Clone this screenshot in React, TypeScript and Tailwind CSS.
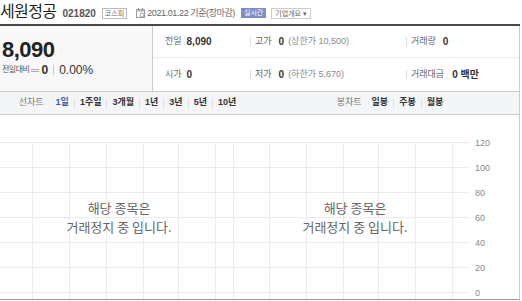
import React from 'react';

const hLines = [0, 25, 50, 75, 100, 125, 150];
const vLines = [32, 69, 106, 143, 178, 215, 233, 269, 306, 343, 378, 415, 452];
const yLabels = ['120', '100', '80', '60', '40', '20', '0'];

function Sep() {
  return <span className="mx-[5px] inline-block w-px h-[9px] bg-[#dddddd]" />;
}

function CalendarIcon() {
  return (
    <svg width="9" height="10" viewBox="0 0 9 10" className="shrink-0">
      <rect x="0.5" y="1.5" width="8" height="8" fill="#fff" stroke="#9a9a9a" />
      <rect x="0.5" y="1.5" width="8" height="2" fill="#b5b5b5" />
      <rect x="2" y="0" width="1" height="2" fill="#888" />
      <rect x="6" y="0" width="1" height="2" fill="#888" />
      <circle cx="6" cy="7" r="2" fill="#fff" stroke="#8a8a8a" strokeWidth="0.8" />
    </svg>
  );
}

export default function App() {
  return (
    <div className="w-[522px] h-[301px] overflow-hidden bg-white font-['Liberation_Sans','Noto_Sans_CJK_KR',sans-serif] text-[#333]">
      {/* Title */}
      <div className="flex items-center h-[24px] w-[520px]">
        <h1 className="text-[16px] leading-[24px] font-normal text-[#222] tracking-[-0.6px]">세원정공</h1>
        <span className="ml-[6px] text-[10px] font-bold text-[#555] leading-none mt-[3px]">021820</span>
        <span className="ml-[6px] mt-[2px] border border-[#bbbbbb] h-[11px] px-[2px] text-[7px] leading-[9px] text-[#666]">코스피</span>
        <span className="ml-[9px] mt-[2px]"><CalendarIcon /></span>
        <span className="ml-[2px] mt-[2px] text-[9px] leading-none text-[#666] tracking-[-0.4px]">2021.01.22 기준(장마감)</span>
        <span className="ml-[6px] mt-[2px] bg-[#7d8fc4] h-[10px] px-[3px] text-[7px] leading-[10px] text-white">실시간</span>
        <span className="ml-[5px] mt-[2px] border border-[#cccccc] h-[11px] px-[3px] text-[7px] leading-[9px] text-[#666]">기업개요 ▾</span>
      </div>
      <div className="h-[2px] w-[520px] bg-[#4a4a4a]" />

      <div className="w-[520px] border-r border-[#cccccc]">
        {/* Price panel */}
        <div className="flex h-[65px]">
          <div className="w-[153px] bg-[#f8f8f8] border-r border-[#cccccc] pl-[2px] pt-[12px] flex flex-col">
            <div className="text-[22px] leading-[24px] font-bold text-[#222] tracking-[-0.5px]">8,090</div>
            <div className="flex items-center h-[14px] mt-[1px]">
              <span className="text-[8px] text-[#555] tracking-[-0.5px]">전일대비</span>
              <span className="ml-[2px] flex flex-col gap-[1px]">
                <span className="block w-[8px] h-px bg-[#aaa]" />
                <span className="block w-[8px] h-px bg-[#aaa]" />
              </span>
              <span className="ml-[2px] text-[12px] font-bold text-[#333]">0</span>
              <span className="mx-[5px] inline-block w-px h-[10px] bg-[#cccccc]" />
              <span className="text-[12px] text-[#333]">0.00%</span>
            </div>
          </div>
          <div className="flex-1 flex flex-col">
            <div className="h-[32px] border-b border-[#eeeeee] grid grid-cols-[92px_156px_1fr] items-center text-[10px]">
              <div className="pl-[12px] flex items-center">
                <span className="text-[9px] text-[#666]">전일</span>
                <span className="ml-[5px] font-bold">8,090</span>
              </div>
              <div className="flex items-center">
                <Sep />
                <span className="text-[9px] text-[#666] -ml-[1px]">고가</span>
                <span className="ml-[7px] font-bold">0</span>
                <span className="ml-[4px] text-[9px] text-[#888]">(상한가 10,500)</span>
              </div>
              <div className="flex items-center">
                <Sep />
                <span className="text-[9px] text-[#666] -ml-[1px]">거래량</span>
                <span className="ml-[7px] font-bold">0</span>
              </div>
            </div>
            <div className="flex-1 grid grid-cols-[92px_156px_1fr] items-center text-[10px]">
              <div className="pl-[12px] flex items-center">
                <span className="text-[9px] text-[#666]">시가</span>
                <span className="ml-[5px] font-bold">0</span>
              </div>
              <div className="flex items-center">
                <Sep />
                <span className="text-[9px] text-[#666] -ml-[1px]">저가</span>
                <span className="ml-[7px] font-bold">0</span>
                <span className="ml-[4px] text-[9px] text-[#888]">(하한가 5,670)</span>
              </div>
              <div className="flex items-center">
                <Sep />
                <span className="text-[9px] text-[#666] -ml-[1px]">거래대금</span>
                <span className="ml-[8px] font-bold">0 백만</span>
              </div>
            </div>
          </div>
        </div>

        {/* Chart tabs */}
        <div className="flex h-[24px] border-y border-[#cccccc] bg-[#f4f5f7] text-[9px] font-bold">
          <div className="w-[261px] flex items-center justify-center pr-[6px]">
            <span className="font-normal text-[#777] mr-[12px]">선차트</span>
            <span className="text-[#3a5ca8]">1일</span>
            <Sep />
            <span>1주일</span>
            <Sep />
            <span>3개월</span>
            <Sep />
            <span>1년</span>
            <Sep />
            <span>3년</span>
            <Sep />
            <span>5년</span>
            <Sep />
            <span>10년</span>
          </div>
          <div className="flex-1 flex items-center justify-center">
            <span className="font-normal text-[#777] mr-[10px]">봉차트</span>
            <span>일봉</span>
            <Sep />
            <span>주봉</span>
            <Sep />
            <span>월봉</span>
          </div>
        </div>

        {/* Chart */}
        <div className="mt-[27px] relative h-[159px]">
          <svg className="absolute inset-0 overflow-visible" width="519" height="159">
            {hLines.map((y, i) => (
              <g key={y}>
                <line x1="0" x2="470" y1={y + 0.5} y2={y + 0.5} stroke="#ececec" />
                <text x="475" y={y + 3.5} fontSize="9" fill="#888" fontFamily="Liberation Sans, sans-serif">
                  {yLabels[i]}
                </text>
              </g>
            ))}
            {vLines.map((x) => (
              <line key={x} x1={x + 0.5} x2={x + 0.5} y1="0" y2="157" stroke="#ececec" />
            ))}
            <line x1="0" x2="519" y1="157.5" y2="157.5" stroke="#999" />
          </svg>
          <div className="relative flex h-[157px] text-[13px] leading-[19px] text-[#666] text-center font-['Noto_Sans_CJK_KR',sans-serif]">
            <div className="w-[233px] flex flex-col items-center justify-center pb-[7px] pl-[5px]">
              <p>해당 종목은</p>
              <p>거래정지 중 입니다.</p>
            </div>
            <div className="w-[235px] flex flex-col items-center justify-center pb-[7px] pl-[9px]">
              <p>해당 종목은</p>
              <p>거래정지 중 입니다.</p>
            </div>
          </div>
        </div>
      </div>
    </div>
  );
}
